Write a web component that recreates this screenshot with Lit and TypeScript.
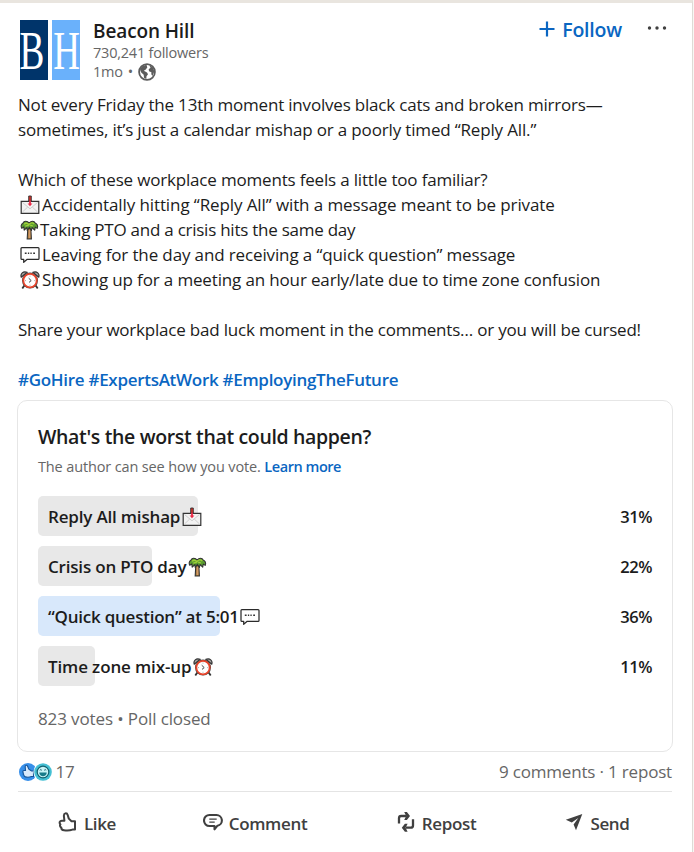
import { LitElement, html, svg, css } from "lit";
import { customElement, property } from "lit/decorators.js";
import { styleMap } from "lit/directives/style-map.js";

const emoji = {
  mail: svg`
    <path d="M1.2 6.3h17.6v12H1.2z" fill="#f2f2f2" stroke="#333" stroke-width="1.2"/>
    <path d="M2.5 7.5 10 13.8l7.5-6.3M2.5 17l5.2-5M17.5 17l-5.2-5" fill="none" stroke="#c9c9c9" stroke-width=".9"/>
    <path d="M8.7 1h2.6v5H8.7z" fill="#d22f27" stroke="#333" stroke-width=".9"/>
    <path d="M9.1 5.5h1.8v3h1.5L10 11.2 7.6 8.5h1.5z" fill="#ea2946"/>`,
  palm: svg`
    <path d="M7.8 8.5 7.2 19h4.2l-.6-10.5z" fill="#a57939" stroke="#333" stroke-width="1.1"/>
    <path d="M9.5 10v8" stroke="#d39b6b" stroke-width="1.6"/>
    <path d="M9.2 3.2C7 .4 4 1 2.9 3.2 1.2 4 .6 6.3 1.8 8.3l2-1.4.4 3.2 2.7-2.6.3 3 2.2-3.2 2 3.2.7-3 2.6 2.6.6-3 1.9 1.3c1.2-2.7-.3-4.8-1.8-5.2C14 .7 11.2.6 9.2 3.2z" fill="#5c9e31" stroke="#333" stroke-width="1.1" stroke-linejoin="round"/>
    <path d="M4 4.3c1.7-1.5 3.5-1.3 5 .2 1.500-1.800 3.600-1.900 5.300-.5M5.300 6.200l3.500-1M13 6l-2.800-.9" fill="none" stroke="#a0cf3a" stroke-width="1.3"/>`,
  chat: svg`
    <path d="M1.9 2.6h16.2q.9 0 .9.9v9.9q0 .9-.9.9H7.2l-3.500 3v-3H1.9q-.9 0-.9-.9V3.500q0-.9.9-.9z" fill="#fff" stroke="#2b2b2b" stroke-width="1.25" stroke-linejoin="round"/>
    <path d="M4.800 8.200h1.800M7.900 8.200h1.300M10.400 8.200h1.300M13.200 8.200h1.800" stroke="#333" stroke-width="1.600"/>`,
  clock: svg`
    <path d="m4.3 15.5-2 3M15.7 15.5l2 3" stroke="#333" stroke-width="1.8"/>
    <path d="M1.2 7.2C.2 3.5 3 .9 7.2 2.3zM18.8 7.2c1-3.7-1.8-6.3-6-4.9z" fill="#a8a8a8" stroke="#333" stroke-width="1.2" stroke-linejoin="round"/>
    <circle cx="10" cy="10.6" r="8" fill="#444"/>
    <circle cx="10" cy="10.6" r="6.7" fill="#fff" stroke="#e8452c" stroke-width="1.8"/>
    <path d="m8.7 8.2 2.5 2.4-2.2 1.8" fill="none" stroke="#444" stroke-width="1"/>
    <path d="M10 5.6v1M10 14.8v1M5 10.6h1M14.2 10.6h1" stroke="#999" stroke-width=".8"/>`,
};
type EmojiName = keyof typeof emoji;
const picture = (n: EmojiName) =>
  html`<svg class="emoji ${n}" viewBox="0 0 20 20">${emoji[n]}</svg>`;

interface Line { text: string; tracking: number; icon?: EmojiName }
const lines: Line[] = [
  { text: "Not every Friday the 13th moment involves black cats and broken mirrors—", tracking: -0.195 },
  { text: "sometimes, it’s just a calendar mishap or a poorly timed “Reply All.”", tracking: -0.16 },
  { text: "", tracking: 0 },
  { text: "Which of these workplace moments feels a little too familiar?", tracking: -0.18 },
  { text: "Accidentally hitting “Reply All” with a message meant to be private", tracking: -0.1 },
  { text: "Taking PTO and a crisis hits the same day", tracking: -0.25, icon: "palm" },
  { text: "Leaving for the day and receiving a “quick question” message", tracking: -0.132, icon: "chat" },
  { text: "Showing up for a meeting an hour early/late due to time zone confusion", tracking: -0.15, icon: "clock" },
  { text: "", tracking: 0 },
  { text: "Share your workplace bad luck moment in the comments… or you will be cursed!", tracking: -0.205 },
];
lines[4].icon = "mail";

interface Option { text: string; share: number; bar: number; tracking: number; icon: EmojiName; picked?: boolean }
const options: Option[] = [
  { text: "Reply All mishap", share: 31, bar: 160, tracking: -0.18, icon: "mail" },
  { text: "Crisis on PTO day", share: 22, bar: 114, tracking: -0.19, icon: "palm" },
  { text: "“Quick question” at 5:01", share: 36, bar: 182, tracking: -0.23, icon: "chat", picked: true },
  { text: "Time zone mix-up", share: 11, bar: 57, tracking: -0.13, icon: "clock" },
];

@customElement("post-poll")
class PostPoll extends LitElement {
  @property({ attribute: false }) options: Option[] = [];
  static styles = css`
    :host { display: block; box-sizing: border-box; height: 352px; border: 1px solid #e6e6e6; border-radius: 10px; padding: 21px 20px 0; }
    .title { font-size: 19.5px; font-weight: 600; line-height: 30px; letter-spacing: -.35px; }
    .note { font-size: 14.5px; line-height: 20px; margin-top: 5px; color: #666; letter-spacing: -.14px; white-space: pre; }
    .note b { color: #0a66c2; font-weight: 600; letter-spacing: -.45px; }
    .rows { display: grid; gap: 10px; margin-top: 19px; }
    .row { display: grid; grid-template-columns: 1fr auto; height: 40px; align-items: center; font-weight: 600; font-size: 17px; line-height: 24px; }
    .bar { grid-area: 1 / 1; height: 40px; border-radius: 5px; background: #e8e8e8; }
    .picked { background: #d8e8fb; }
    .label { grid-area: 1 / 1; padding: 2px 0 0 10px; display: flex; align-items: center; }
    .pct { grid-area: 1 / 2; font-size: 16.5px; letter-spacing: -.5px; padding-top: 2px; }
    .emoji { width: 20px; height: 20px; margin-left: 1.5px; }
    .foot { margin-top: 21px; font-size: 17px; line-height: 24px; color: #666; letter-spacing: -.12px; }
  `;
  render() {
    return html`
      <div class="title">What's the worst that could happen?</div>
      <div class="note">The author can see how you vote. <b>Learn more</b></div>
      <div class="rows">
        ${this.options.map((o) => html`
          <div class="row">
            <div class="bar ${o.picked ? "picked" : ""}" style=${styleMap({ width: `${o.bar}px` })}></div>
            <div class="label"><span style=${styleMap({ letterSpacing: `${o.tracking}px` })}>${o.text}</span>${picture(o.icon)}</div>
            <span class="pct">${o.share}%</span>
          </div>`)}
      </div>
      <div class="foot">823 votes • Poll closed</div>`;
  }
}

const thumb = "M6.400 8.700 5.900 4.200C5.600 .9 8.800.3 9.700 3l1.100 3.600L13.500 9.200H17V17.600H14.500C12 18.500 8.500 18.600 6 18.200 4.300 18 3.200 17 3.300 15.600 1.900 14.700 1.700 13.300 2.400 12.400.9 10.800 1.800 8.700 3.800 8.700Z";

const actions = [
  { label: "Like", art: svg`<path d=${thumb} fill="none" stroke="#404040" stroke-width="2" stroke-linejoin="round"/>` },
  { label: "Comment", art: svg`
      <path d="M6.500 3h7a5.400 5.400 0 0 1 1 10.700L11.500 17.300V14H6.500a5.500 5.500 0 0 1 0-11z" fill="none" stroke="#404040" stroke-width="2.100" stroke-linejoin="round"/>
      <path d="M6.300 7.200h7.400M6.300 10.100h5.400" stroke="#404040" stroke-width="1.300"/>` },
  { label: "Repost", art: svg`
      <path d="M3 11.500V6.200q0-2.200 2.200-2.200H10M17 7.200v6.300q0 2.200-2.200 2.200H10" fill="none" stroke="#404040" stroke-width="2.300"/>
      <path d="M8.200 0h2.700L14 4l-3.100 4H8.200l2-4zM11.600 11.700H8.900l-3.100 4 3.100 4h2.700l-2-4z" fill="#404040"/>` },
  { label: "Send", art: svg`<path d="M18.300 2 1.800 7.700 7.800 10.600 14.300 6 9.600 12.400 12 18.300z" fill="#404040"/>` },
];

@customElement("app-root")
class AppRoot extends LitElement {
  static styles = css`
    :host { display: block; height: 852px; overflow: hidden; background: #f8f7f4; color: #1c1c1c; font-family: "Open Sans", "Noto Sans", sans-serif; }
    .post { box-sizing: border-box; width: 693px; height: 852px; background: #fff; border-top: 3px solid #e9e5df; border-right: 1px solid #dedbd6; padding: 17px 19px 0 17px; }
    .head { display: flex; height: 72px; padding-left: 3px; }
    .logo { width: 60px; height: 60px; flex: none; }
    .who { margin-left: 13px; flex: 1; }
    .name { font-size: 19px; font-weight: 600; line-height: 23px; letter-spacing: -.12px; }
    .meta { font-size: 14.5px; line-height: 19px; letter-spacing: -.22px; color: #666; display: flex; align-items: center; gap: 5px; }
    .globe { width: 18px; height: 18px; }
    .follow { display: flex; height: 18px; align-items: center; gap: 7px; color: #0a66c2; font-size: 19.5px; font-weight: 600; letter-spacing: -.2px; }
    .plus { width: 16px; height: 16px; }
    .dots { width: 20px; height: 16px; margin: 0 6px 0 25px; }
    .body { padding-left: 1px; font-size: 17px; height: 308px; }
    .line { height: 25px; line-height: 25px; display: flex; align-items: center; white-space: nowrap; }
    .tags { color: #0a66c2; font-weight: 600; letter-spacing: -.29px; }
    .emoji { width: 20px; height: 20px; margin: 0 2.5px 0 1.5px; }
    .palm { margin-right: .5px; }
    .social { height: 39px; margin: 0 1px; display: flex; align-items: center; color: #666; font-size: 17px; letter-spacing: -.18px; border-bottom: 1px solid #e4e4e4; }
    .faces { width: 34px; height: 20px; margin: 0 2.5px 0 1px; }
    .count { flex: 1; }
    .actions { display: grid; grid-template-columns: 138px 198px 164px 158px; margin: 19px -4px 0 1px; }
    .act { display: flex; justify-content: center; align-items: center; gap: 6px; height: 24px; color: #404040; font-size: 17px; font-weight: 600; letter-spacing: -.33px; }
    .act svg { width: 20px; height: 20px; margin-top: -3px; }
  `;
  render() {
    return html`
      <article class="post">
        <header class="head">
          <svg class="logo" viewBox="0 0 60 60">
            <path d="M0 0h28v60H0z" fill="#00346a"/><path d="M32 0h28v60H32z" fill="#6ab1fb"/>
            <g fill="#fff" font-family="Liberation Serif, serif" font-size="54">
              <text transform="translate(-.500 48.500) scale(.69 1)">B</text>
              <text transform="translate(33.200 48.500) scale(.685 1)">H</text>
            </g>
          </svg>
          <div class="who">
            <div class="name">Beacon Hill</div>
            <div class="meta">730,241 followers</div>
            <div class="meta"><span>1mo</span><span>•</span>
              <svg class="globe" viewBox="0 0 18 18"><circle cx="9" cy="9" r="7.900" fill="#fff" stroke="#5c5c5c" stroke-width="1.800"/>
                <path d="M2 6 4.500 3 8.500 1.800 9.300 4.500 7.500 6.700 5.800 7.800 9 9.500 10 11.300 8.500 13.300 8.300 16 6 14.800 5.700 11.800 3 9.200zM11.200 2 15 4.500 16.300 8.500 14.500 13 13.300 11.200 13.400 9.300 11 8.200 10.700 6.200 12.500 4.800z" fill="#5c5c5c"/></svg>
            </div>
          </div>
          <div class="follow"><svg class="plus" viewBox="0 0 16 16"><path d="M8 .5v15M.5 8h15" stroke="#0a66c2" stroke-width="2.200"/></svg>Follow</div>
          <svg class="dots" viewBox="0 0 20 16"><g fill="#404040"><circle cx="2.500" cy="8" r="1.700"/><circle cx="10" cy="8" r="1.700"/><circle cx="17.500" cy="8" r="1.700"/></g></svg>
        </header>
        <section class="body">
          ${lines.map((l) => html`<div class="line">${l.icon ? picture(l.icon) : ""}<span style=${styleMap({ letterSpacing: `${l.tracking}px` })}>${l.text}</span></div>`)}
          <div class="line"></div>
          <div class="line tags">#GoHire #ExpertsAtWork #EmployingTheFuture</div>
        </section>
        <post-poll .options=${options}></post-poll>
        <div class="social">
          <svg class="faces" viewBox="0 0 34 20">
            <circle cx="9" cy="10" r="9" fill="#378fe9"/>
            <path d="M6.500 8.500 6.200 4.700C6 3 8 2.800 8.600 4.200L9.800 7.100 12.500 9H14.500V14.500H12.500C10.500 15.300 8 15.300 6.500 14.900 5.500 14.700 5 14 5 13.200 4 12.600 4 11.700 4.400 11.200 3.400 10.200 3.600 8.500 5.200 8.500z" fill="#d9eafc" stroke="#15559a" stroke-width="1.100"/>
            <circle cx="24" cy="10" r="9.600" fill="#fff"/><circle cx="24" cy="10" r="8.800" fill="#44bfd3"/>
            <circle cx="24" cy="10" r="5.800" fill="#c9f4f7" stroke="#13616f" stroke-width="1.200"/>
            <path d="M20.300 10.600h7.400c0 5-7.400 5-7.400 0z" fill="#187b8a"/>
            <path d="M20.800 8.300q1-1.500 2 0M25.200 8.300q1-1.500 2 0" fill="none" stroke="#13616f" stroke-width="1"/>
          </svg>
          <span class="count">17</span><span>9 comments · 1 repost</span>
        </div>
        <nav class="actions">
          ${actions.map((a) => html`<div class="act"><svg viewBox="0 0 20 20">${a.art}</svg>${a.label}</div>`)}
        </nav>
      </article>`;
  }
}
